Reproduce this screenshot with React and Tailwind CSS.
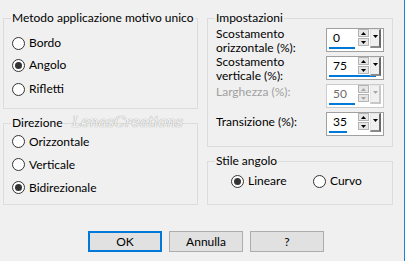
const Radio = ({ label, checked }) => (
  <div className="flex items-center">
    <span className="flex h-[13px] w-[13px] items-center justify-center rounded-full border border-[#333333] bg-white">
      {checked && <span className="h-[7px] w-[7px] rounded-full bg-[#333333]" />}
    </span>
    <span className="ml-[4px]">{label}</span>
  </div>
);

const Arrow = ({ up, color }) => (
  <svg width="5" height="3" viewBox="0 0 5 3">
    <polygon points={up ? '0,3 5,3 2.5,0' : '0,0 5,0 2.5,3'} fill={color} />
  </svg>
);

const Spin = ({ value, bar, disabled }) => {
  const tri = disabled ? '#a8a8a8' : '#000000';
  return (
    <div
      className={`flex h-[24px] w-[58px] bg-white border ${
        disabled ? 'border-[#cccccc]' : 'border-[#a0a0a0]'
      }`}
    >
      <div className="flex w-[31px] flex-col pl-[2px] pt-[2px]">
        <span className={`pl-[4px] leading-[14px] ${disabled ? 'text-[#6d6d6d]' : 'text-black'}`}>
          {value}
        </span>
        <div className="mt-[2px] h-[2px] bg-[#0078d7]" style={{ width: bar }} />
      </div>
      <div className="flex w-[11px] flex-col gap-[1px]">
        <div className="flex h-[8px] items-center justify-center border border-[#b4b4b4] bg-[#e6e6e6]">
          <Arrow up color={tri} />
        </div>
        <div className="flex h-[8px] items-center justify-center border border-[#b4b4b4] bg-[#e6e6e6]">
          <Arrow color={tri} />
        </div>
      </div>
      <div
        className={`ml-[1px] flex h-[19px] w-[11px] justify-center border-t border-l border-r-2 border-b-2 bg-[#f0f0f0] pt-[5px] ${
          disabled ? 'border-t-[#e6e6e6] border-l-[#e6e6e6] border-r-[#c8c8c8] border-b-[#c8c8c8]' : 'border-t-[#e3e3e3] border-l-[#e3e3e3] border-r-[#696969] border-b-[#8a8a8a]'
        }`}
      >
        <Arrow color={tri} />
      </div>
    </div>
  );
};

const Group = ({ title, className, children }) => (
  <fieldset className={`min-w-0 border border-[#dcdcdc] ${className}`}>
    <legend className="ml-[7px] px-[1px] leading-[16px]">{title}</legend>
    {children}
  </fieldset>
);

const Button = ({ children, primary }) => (
  <button
    className={`flex h-[21px] w-[74px] items-center justify-center bg-[#e1e1e1] leading-none ${
      primary ? 'border-2 border-[#0078d7]' : 'border border-[#adadad]'
    }`}
  >
    {children}
  </button>
);

export default function App() {
  return (
    <div className="relative h-[261px] w-[405px] overflow-hidden border-r border-[#1883d7] bg-[#f0f0f0] font-[Lato,sans-serif] text-[12px] text-black">
      <div className="flex gap-[9px] pl-[3px] pt-[10px]">
        <div className="flex w-[195px] flex-col">
          <Group title="Metodo applicazione motivo unico" className="h-[99px]">
            <div className="flex flex-col pl-[8px] pt-[6px]">
              <div className="flex h-[22px] items-center">
                <Radio label="Bordo" />
              </div>
              <div className="flex h-[22px] items-center">
                <Radio label="Angolo" checked />
              </div>
              <div className="mt-[2px] flex h-[22px] items-center">
                <Radio label="Rifletti" />
              </div>
            </div>
          </Group>
          <Group title="Direzione" className="mt-[6px] h-[90px]">
            <div className="-mt-px flex flex-col pl-[8px]">
              <div className="flex h-[23px] items-center">
                <Radio label="Orizzontale" />
              </div>
              <div className="flex h-[23px] items-center">
                <Radio label="Verticale" />
              </div>
              <div className="flex h-[23px] items-center">
                <Radio label="Bidirezionale" checked />
              </div>
            </div>
          </Group>
        </div>

        <div className="flex w-[186px] flex-col">
          <Group title="Impostazioni" className="h-[137px]">
            <div className="flex flex-col gap-[4px] px-[8px] pt-[2px]">
              <div className="flex h-[24px] items-start justify-between">
                <span className="-mt-px leading-[14px]">
                  Scostamento
                  <br />
                  orizzontale (%):
                </span>
                <Spin value="0" bar={26} />
              </div>
              <div className="flex h-[24px] items-start justify-between">
                <span className="-mt-px leading-[14px]">
                  Scostamento
                  <br />
                  verticale (%):
                </span>
                <Spin value="75" bar={47} />
              </div>
              <div className="flex h-[24px] items-start justify-between">
                <span className="pt-[1px] leading-[13px] text-[#a0a0a0]">Larghezza (%):</span>
                <Spin value="50" bar={26} disabled />
              </div>
              <div className="flex h-[24px] items-start justify-between">
                <span className="pt-[3px] leading-[13px]">Transizione (%):</span>
                <Spin value="35" bar={18} />
              </div>
            </div>
          </Group>
          <Group title="Stile angolo" className="mt-[6px] h-[52px]">
            <div className="flex h-[22px] items-center pl-[23px] pt-[2px]">
              <div className="w-[82px]">
                <Radio label="Lineare" checked />
              </div>
              <Radio label="Curvo" />
            </div>
          </Group>
        </div>
      </div>

      <div className="mt-[26px] flex gap-[7px] pl-[88px]">
        <Button primary>OK</Button>
        <Button>Annulla</Button>
        <Button>?</Button>
      </div>

      <span className="pointer-events-none absolute left-[72px] top-[112px] font-['DejaVu_Serif',serif] text-[14px] italic text-[#f4f4f4] [text-shadow:0_0_1px_#a8a8a8,0_0_1px_#a8a8a8]">
        LenasCreations
      </span>
    </div>
  );
}
